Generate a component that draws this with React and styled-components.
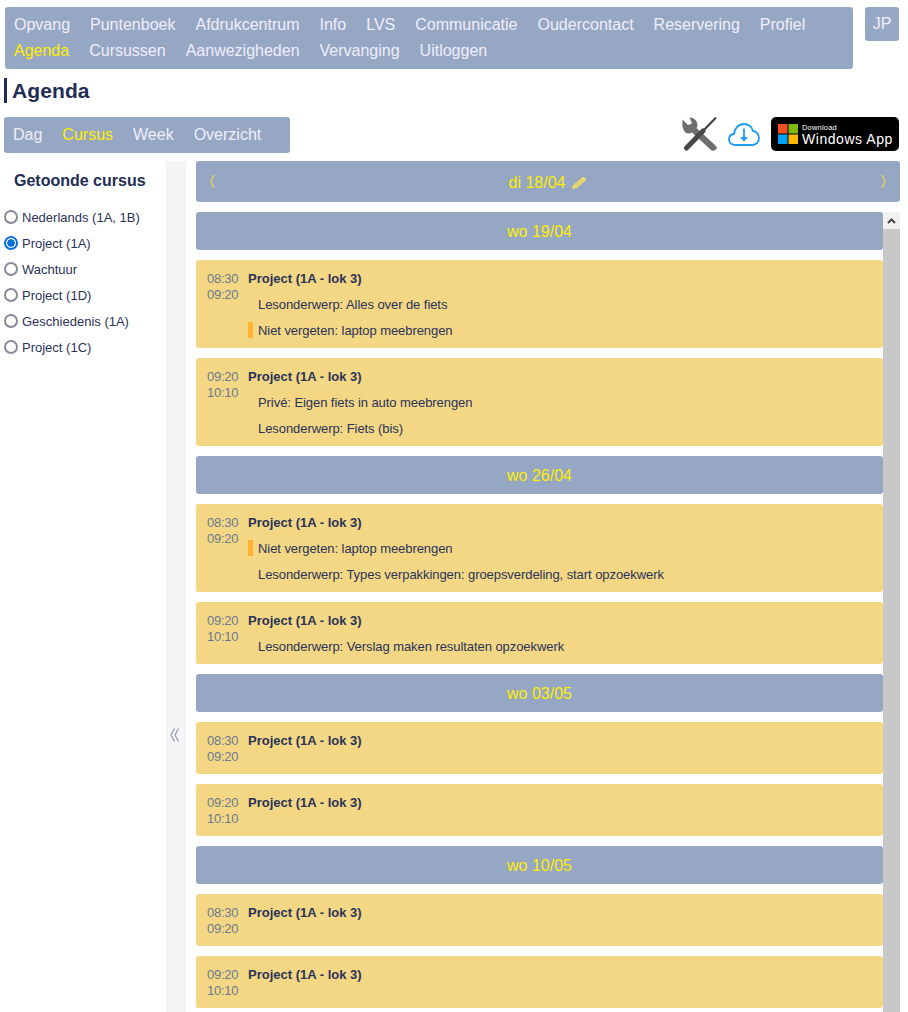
import React from 'react'
import styled, { createGlobalStyle } from 'styled-components'

const mainMenu = ['Opvang', 'Puntenboek', 'Afdrukcentrum', 'Info', 'LVS', 'Communicatie', 'Oudercontact', 'Reservering', 'Profiel', 'Agenda', 'Cursussen', 'Aanwezigheden', 'Vervanging', 'Uitloggen']
const subMenu = ['Dag', 'Cursus', 'Week', 'Overzicht']
const courses = ['Nederlands (1A, 1B)', 'Project (1A)', 'Wachtuur', 'Project (1D)', 'Geschiedenis (1A)', 'Project (1C)']

const days = [
  {
    date: 'wo 19/04',
    lessons: [
      { from: '08:30', to: '09:20', notes: [{ text: 'Lesonderwerp: Alles over de fiets' }, { text: 'Niet vergeten: laptop meebrengen', mark: true }] },
      { from: '09:20', to: '10:10', notes: [{ text: 'Privé: Eigen fiets in auto meebrengen' }, { text: 'Lesonderwerp: Fiets (bis)' }] },
    ],
  },
  {
    date: 'wo 26/04',
    lessons: [
      { from: '08:30', to: '09:20', notes: [{ text: 'Niet vergeten: laptop meebrengen', mark: true }, { text: 'Lesonderwerp: Types verpakkingen: groepsverdeling, start opzoekwerk' }] },
      { from: '09:20', to: '10:10', notes: [{ text: 'Lesonderwerp: Verslag maken resultaten opzoekwerk' }] },
    ],
  },
  { date: 'wo 03/05', lessons: [{ from: '08:30', to: '09:20', notes: [] }, { from: '09:20', to: '10:10', notes: [] }] },
  { date: 'wo 10/05', lessons: [{ from: '08:30', to: '09:20', notes: [] }, { from: '09:20', to: '10:10', notes: [] }] },
]

const App = () => {
  return (
    <Page>
      <GlobalStyle />
      <TopRow>
        <MainNav>
          {mainMenu.map((item) => (
            <NavItem key={item} $active={item === 'Agenda'}>{item}</NavItem>
          ))}
        </MainNav>
        <UserBadge>JP</UserBadge>
      </TopRow>

      <Title>Agenda</Title>

      <Toolbar>
        <SubNav>
          {subMenu.map((item) => (
            <NavItem key={item} $active={item === 'Cursus'}>{item}</NavItem>
          ))}
        </SubNav>
        <Tools>
          <ToolsIcon />
          <CloudIcon />
          <AppBadge>
            <WindowsFlag />
            <BadgeText>
              <BadgeSmall>Download</BadgeSmall>
              <BadgeBig>Windows App</BadgeBig>
            </BadgeText>
          </AppBadge>
        </Tools>
      </Toolbar>

      <Content>
        <Sidebar>
          <SideTitle>Getoonde cursus</SideTitle>
          {courses.map((course, i) => (
            <CourseRow key={course + i}>
              <Radio type="radio" name="course" defaultChecked={i === 1} />
              {course}
            </CourseRow>
          ))}
        </Sidebar>

        <Gutter>
          <svg width="9" height="14" viewBox="0 0 9 14" fill="none" stroke="#8f97a8" strokeWidth="1.2">
            <path d="M4.500 .5L1 7l3.500 6.500M8.500 .5L5 7l3.500 6.500" />
          </svg>
        </Gutter>

        <Main>
          <DateBar>
            <svg width="5" height="15" viewBox="0 0 5 15" fill="none" stroke="#ffe92e" strokeWidth="1">
              <path d="M4 1L1 7.500 4 14" />
            </svg>
            <DateLabel>
              di 18/04
              <PencilIcon />
            </DateLabel>
            <svg width="5" height="15" viewBox="0 0 5 15" fill="none" stroke="#ffe92e" strokeWidth="1">
              <path d="M1 1l3 6.500L1 14" />
            </svg>
          </DateBar>

          <ScrollArea>
            <List>
              {days.map((day) => (
                <React.Fragment key={day.date}>
                  <DayBar>{day.date}</DayBar>
                  {day.lessons.map((lesson) => (
                    <Lesson key={lesson.from}>
                      <Times>
                        <div>{lesson.from}</div>
                        <div>{lesson.to}</div>
                      </Times>
                      <Details>
                        <LessonTitle>Project (1A - lok 3)</LessonTitle>
                        {lesson.notes.map((note) => (
                          <Note key={note.text}>
                            {note.mark && <Mark />}
                            {note.text}
                          </Note>
                        ))}
                      </Details>
                    </Lesson>
                  ))}
                </React.Fragment>
              ))}
            </List>
            <Scrollbar>
              <ScrollButton>
                <svg width="9" height="6" viewBox="0 0 9 6" fill="none" stroke="#444" strokeWidth="2">
                  <path d="M1 5l3.500-3.500L8 5" />
                </svg>
              </ScrollButton>
              <ScrollThumb />
            </Scrollbar>
          </ScrollArea>
        </Main>
      </Content>
    </Page>
  )
}

export default App

const ToolsIcon = () => (
  <svg width="36" height="34" viewBox="0 0 36 34">
    <path d="M1.500 2.500L7 8 11 6.500 8.500.5C13 .5 16.500 4 16.500 8 16.500 9.500 16 10.500 15.500 11L35 29C36 30.500 36 31.500 35 32.500L33 33.500C32 34 31 34 30 33L11 15.500C10 16 9 16.500 7.500 16.500 3.500 16.500 .5 12 1.500 2.500z" fill="#6e6e6e" />
    <path d="M35 .5L21 15" stroke="#3a3a3a" strokeWidth="2" fill="none" />
    <path d="M22 14L5.500 31" stroke="#484848" strokeWidth="5" strokeLinecap="round" fill="none" />
  </svg>
)

const CloudIcon = () => (
  <svg width="32" height="23" viewBox="0 0 32 23" fill="none" stroke="#1a9cf5" strokeWidth="1.800">
    <path d="M7.500 22C3.500 22 1 19.500 1 16.300 1 13.500 3 11.300 6 11 6.500 5.500 10.500 1 16 1c4.300 0 7.700 2.700 9 7 3.500.3 6 3.500 6 7 0 3.800-2.700 7-6.500 7z" />
    <path d="M16 5.500v11" />
    <path d="M12 14l4 4.500 4-4.500z" fill="#1a9cf5" stroke="none" />
  </svg>
)

const PencilIcon = () => (
  <svg width="16" height="14" viewBox="0 0 16 14">
    <path d="M1 13l1-4L11 1.500c.8-.7 1.800-.7 2.500 0l1 1c.6.700.6 1.500 0 2.200L6 12z" fill="#ecdc6e" />
    <path d="M3.500 9l7-6M5 10.500l7-6" stroke="#bdb98a" strokeWidth=".6" />
  </svg>
)

const WindowsFlag = () => (
  <svg width="20" height="20" viewBox="0 0 20 20">
    <rect width="9.500" height="9.500" fill="#f25022" />
    <rect x="10.500" width="9.500" height="9.500" fill="#7fba00" />
    <rect y="10.500" width="9.500" height="9.500" fill="#00a4ef" />
    <rect x="10.500" y="10.500" width="9.500" height="9.500" fill="#ffb900" />
  </svg>
)

const GlobalStyle = createGlobalStyle`
  html, body {
    margin: 0;
    background: #fff;
    overflow: hidden;
  }
`

const Page = styled.div`
  height: 1012px;
  overflow: hidden;
  display: flex;
  flex-direction: column;
  font-family: "Liberation Sans", Arial, sans-serif;
  color: #1f2d56;
`

const TopRow = styled.div`
  display: flex;
  align-items: flex-start;
  gap: 12px;
  padding: 7px 9px 0 5px;
`

const MainNav = styled.div`
  width: 848px;
  height: 62px;
  box-sizing: border-box;
  padding: 5px 9px;
  display: flex;
  flex-wrap: wrap;
  align-content: flex-start;
  column-gap: 20px;
  background: #96a7c4;
  border-radius: 3px;
`

const NavItem = styled.div`
  font-size: 16px;
  line-height: 26px;
  color: ${(p) => (p.$active ? '#ffee00' : '#f0eefa')};
`

const UserBadge = styled.div`
  width: 34px;
  height: 34px;
  line-height: 34px;
  text-align: center;
  font-size: 16px;
  color: #f0eefa;
  background: #96a7c4;
  border-radius: 3px;
`

const Title = styled.h1`
  margin: 9px 0 0 4px;
  padding-left: 5px;
  height: 25px;
  line-height: 26px;
  font-size: 21px;
  letter-spacing: 0.1px;
  font-weight: bold;
  border-left: 3px solid #1f2d56;
`

const Toolbar = styled.div`
  margin-top: 14px;
  padding: 0 9px 0 4px;
  display: flex;
  justify-content: space-between;
  align-items: flex-start;
`

const SubNav = styled.div`
  width: 286px;
  height: 36px;
  box-sizing: border-box;
  padding: 5px 9px;
  display: flex;
  column-gap: 20px;
  background: #96a7c4;
  border-radius: 3px;
`

const Tools = styled.div`
  display: flex;
  align-items: center;
  gap: 11px;
`

const AppBadge = styled.div`
  width: 128px;
  height: 34px;
  box-sizing: border-box;
  padding-left: 7px;
  display: flex;
  align-items: center;
  gap: 4px;
  background: #000;
  border-radius: 5px;
  color: #fff;
`

const BadgeText = styled.div`
  display: flex;
  flex-direction: column;
  padding-top: 1px;
`

const BadgeSmall = styled.div`
  font-size: 7.500px;
  line-height: 9px;
  letter-spacing: 0.2px;
`

const BadgeBig = styled.div`
  font-size: 14px;
  line-height: 15px;
  letter-spacing: 0.55px;
  white-space: nowrap;
`

const Content = styled.div`
  flex: 1;
  min-height: 0;
  margin-top: 8px;
  display: flex;
`

const Sidebar = styled.div`
  width: 166px;
  flex-shrink: 0;
  box-sizing: border-box;
  padding-left: 4px;
`

const SideTitle = styled.div`
  margin: 10px 0 14px 10px;
  font-size: 16px;
  line-height: 19px;
  font-weight: bold;
`

const CourseRow = styled.label`
  display: flex;
  align-items: center;
  gap: 4px;
  height: 26px;
  font-size: 13px;
  color: #2a3358;
`

const Radio = styled.input`
  appearance: none;
  margin: 0;
  width: 14px;
  height: 14px;
  box-sizing: border-box;
  border: 2px solid #8a8a98;
  border-radius: 50%;
  background: #fff;

  &:checked {
    border-color: #0b6fe0;
    background: radial-gradient(circle, #0b6fe0 0 3.500px, #fff 4px);
  }
`

const Gutter = styled.div`
  width: 20px;
  flex-shrink: 0;
  box-sizing: border-box;
  background: #f5f5f5;
  display: flex;
  align-items: flex-start;
  justify-content: center;
  padding: 567px 3px 0 0;
`

const Main = styled.div`
  width: 704px;
  margin-left: 10px;
  display: flex;
  flex-direction: column;
  gap: 10px;
  min-height: 0;
`

const DateBar = styled.div`
  height: 41px;
  flex-shrink: 0;
  box-sizing: border-box;
  padding: 0 14px;
  display: flex;
  align-items: center;
  justify-content: space-between;
  background: #96a7c4;
  border-radius: 3px;
`

const DateLabel = styled.div`
  display: flex;
  align-items: center;
  gap: 6px;
  padding-top: 2px;
  font-size: 16px;
  color: #ffee00;
`

const ScrollArea = styled.div`
  flex: 1;
  min-height: 0;
  display: flex;
  overflow: hidden;
`

const List = styled.div`
  flex: 1;
  display: flex;
  flex-direction: column;
  gap: 10px;
`

const DayBar = styled.div`
  height: 38px;
  line-height: 40px;
  text-align: center;
  font-size: 16px;
  color: #ffee00;
  background: #96a7c4;
  border-radius: 3px;
`

const Lesson = styled.div`
  display: flex;
  padding-left: 11px;
  background: #f3d785;
  border-radius: 3px;
  font-size: 13px;
`

const Times = styled.div`
  width: 32px;
  margin-right: 9px;
  padding: 11px 0 9px;
  line-height: 16px;
  letter-spacing: -0.25px;
  color: #6c7a90;
`

const Details = styled.div`
  padding: 6px 0 4px;
`

const LessonTitle = styled.div`
  line-height: 26px;
  font-weight: bold;
  color: #2a3358;
`

const Note = styled.div`
  position: relative;
  padding-left: 10px;
  line-height: 26px;
  letter-spacing: -0.065px;
  color: #2a3358;
`

const Mark = styled.span`
  position: absolute;
  left: 0;
  top: 4px;
  width: 5px;
  height: 16px;
  background: #ffb030;
`

const Scrollbar = styled.div`
  width: 17px;
  flex-shrink: 0;
  display: flex;
  flex-direction: column;
`

const ScrollButton = styled.div`
  height: 17px;
  display: flex;
  align-items: center;
  justify-content: center;
  background: #f1f1f1;
`

const ScrollThumb = styled.div`
  flex: 1;
  background: #c8c8c8;
`
